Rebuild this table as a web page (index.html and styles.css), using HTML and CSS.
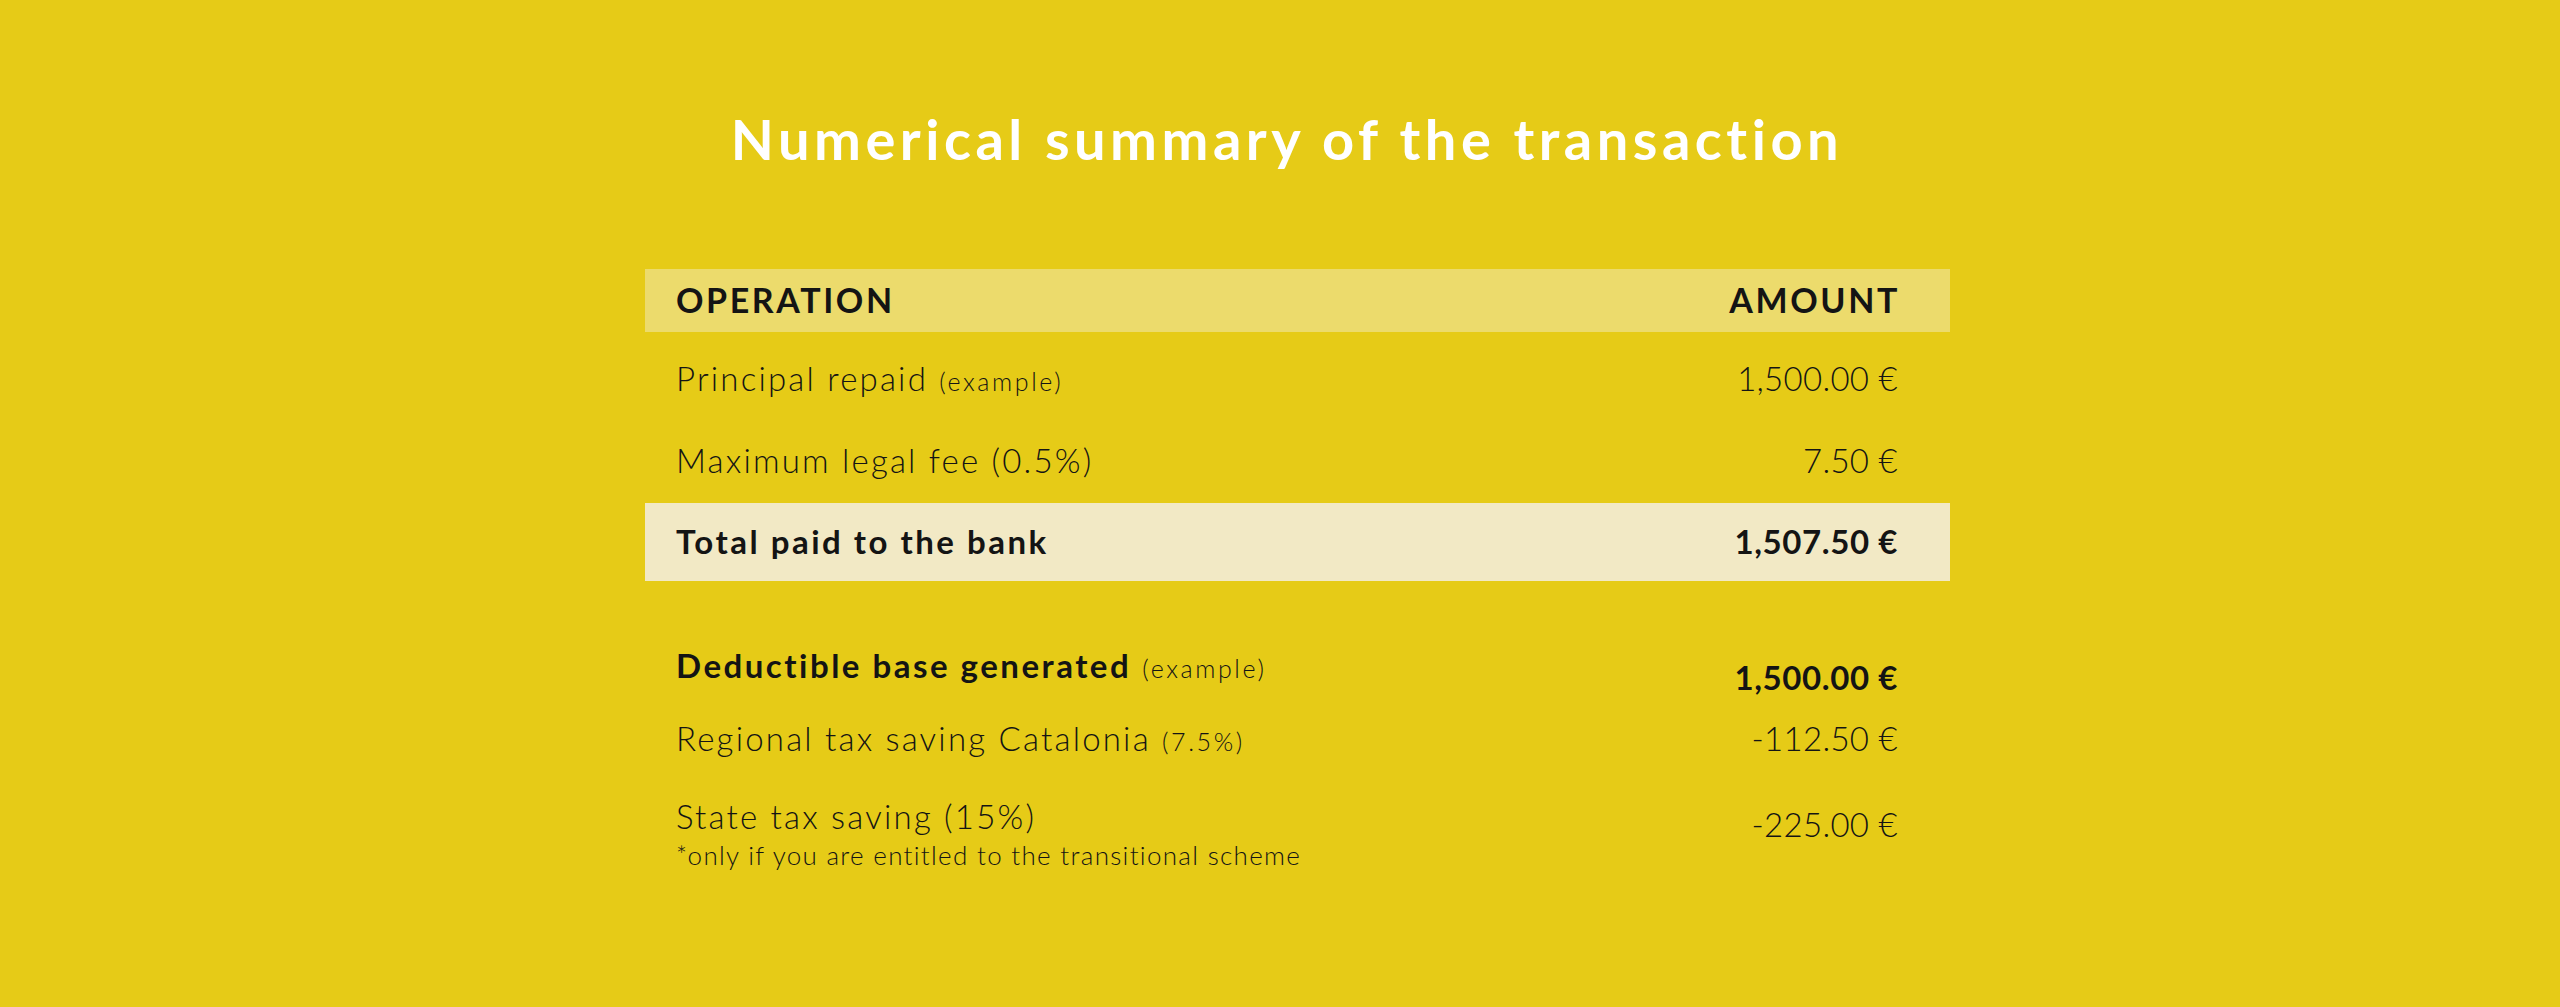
FILE: index.html
```html
<!DOCTYPE html>
<html lang="en">
<head>
<meta charset="utf-8">
<title>Numerical summary of the transaction</title>
<link rel="stylesheet" href="styles.css">
</head>
<body>
<main class="page">
  <h1 class="title">Numerical summary of the transaction</h1>
  <section class="table">
    <div class="row row-head">
      <span class="label">OPERATION</span>
      <span class="amt">AMOUNT</span>
    </div>
    <div class="row row-first">
      <span class="label">Principal repaid <small class="note">(example)</small></span>
      <span class="amt">1,500.00 €</span>
    </div>
    <div class="row row-second">
      <span class="label">Maximum legal fee (0.5%)</span>
      <span class="amt">7.50 €</span>
    </div>
    <div class="row row-total">
      <span class="label strong">Total paid to the bank</span>
      <span class="amt strong">1,507.50 €</span>
    </div>
  </section>
  <section class="savings">
    <div class="srow srow-base">
      <span class="label"><b class="strong">Deductible base generated</b> <small class="note">(example)</small></span>
      <span class="amt strong">1,500.00 €</span>
    </div>
    <div class="srow srow-regional">
      <span class="label">Regional tax saving Catalonia <small class="note">(7.5%)</small></span>
      <span class="amt">-112.50 €</span>
    </div>
    <div class="srow srow-state">
      <span class="label">State tax saving (15%)<span class="foot">*only if you are entitled to the transitional scheme</span></span>
      <span class="amt">-225.00 €</span>
    </div>
  </section>
</main>
</body>
</html>
```

FILE: styles.css
```css
html, body {
  margin: 0;
  padding: 0;
}

body {
  background: #e6cb17;
  color: #141414;
  font-family: Lato, "Open Sans", "Noto Sans", sans-serif;
  font-weight: 300;
  min-height: 1007px;
}

.page {
  padding-top: 105px;
}

.title {
  margin: 0;
  padding-left: 14px;
  text-align: center;
  color: #ffffff;
  font-size: 56px;
  line-height: 1.2;
  font-weight: 700;
  letter-spacing: 4.5px;
}

.table,
.savings {
  width: 1305px;
  margin-left: calc(50% - 635px);
}

.table {
  margin-top: 97px;
  display: flex;
  flex-direction: column;
}

.row,
.srow {
  display: flex;
  justify-content: space-between;
  padding: 0 52px 0 31px;
  font-size: 33px;
  line-height: 1.2;
}

.row {
  align-items: center;
}

.label {
  letter-spacing: 2.2px;
}

.amt {
  letter-spacing: 0.3px;
}

.row-head {
  height: 63px;
  background: #ecdb6c;
  font-weight: 700;
  font-size: 34px;
}

.row-head .label,
.row-head .amt {
  letter-spacing: 2.6px;
}

.row-head .amt {
  margin-right: -2px;
}

.row-first {
  height: 78px;
  padding-top: 8px;
}

.row-second {
  height: 85px;
}

.row-total {
  height: 78px;
  background: #f2e9c5;
}

.strong {
  font-weight: 700;
  letter-spacing: 2.5px;
}

.amt.strong {
  letter-spacing: 0.6px;
}

.note {
  font-size: 25px;
  font-weight: 300;
  letter-spacing: 2.6px;
}

.savings {
  margin-top: 65px;
  display: flex;
  flex-direction: column;
}

.srow {
  align-items: flex-start;
}

.srow-base .amt {
  padding-top: 12px;
}

.srow-regional {
  margin-top: 21px;
  align-items: center;
}

.srow-state {
  margin-top: 39px;
}

.srow-state .amt {
  padding-top: 8px;
}

.foot {
  display: block;
  margin-top: 3px;
  font-size: 26px;
  line-height: 1.2;
  letter-spacing: 1.3px;
}
```
